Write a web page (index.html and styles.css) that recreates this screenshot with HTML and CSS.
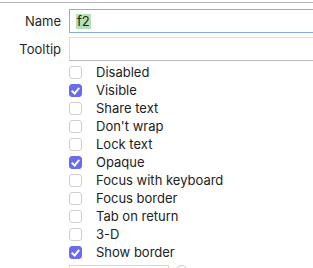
FILE: index.html
```html
<!DOCTYPE html>
<html lang="en">
<head>
  <meta charset="UTF-8">
  <meta name="viewport" content="width=device-width, initial-scale=1.0">
  <title>Field Properties</title>
  <link rel="stylesheet" href="styles.css">
</head>
<body>
  <div class="top-rule"></div>

  <div class="inspector">
    <div class="field-row">
      <label class="field-label" for="name">Name</label>
      <div class="text-box focused" id="name"><span class="selected">f2</span></div>
    </div>
    <div class="field-row">
      <label class="field-label" for="tooltip">Tooltip</label>
      <div class="text-box" id="tooltip"></div>
    </div>

    <ul class="check-list">
      <li><span class="check"></span>Disabled</li>
      <li><span class="check on"></span>Visible</li>
      <li><span class="check"></span>Share text</li>
      <li><span class="check"></span>Don't wrap</li>
      <li><span class="check"></span>Lock text</li>
      <li><span class="check on"></span>Opaque</li>
      <li><span class="check"></span>Focus with keyboard</li>
      <li><span class="check"></span>Focus border</li>
      <li><span class="check"></span>Tab on return</li>
      <li><span class="check"></span>3-D</li>
      <li><span class="check on"></span>Show border</li>
    </ul>

    <div class="stepper-row">
      <div class="small-box"></div>
      <span class="round-btn"></span>
    </div>
  </div>
</body>
</html>
```

FILE: styles.css
```css
body {
  font-family: Inter, "Liberation Sans", sans-serif;
  font-size: 13px;
  color: #222;
  background-color: #fff;
  margin: 0;
  padding: 0;
  overflow: hidden;
}

.top-rule {
  height: 2px;
  border-bottom: 1px solid #b4b4b4;
}

.inspector {
  padding-top: 6px;
}

.field-row {
  display: grid;
  grid-template-columns: 61px 1fr;
  column-gap: 8px;
  align-items: center;
  margin-bottom: 4px;
}

.field-label {
  text-align: right;
  color: #262626;
}

.text-box {
  height: 22px;
  border: 1px solid #dcdcdc;
  border-bottom-color: #b9b9b9;
  border-right: none;
  display: flex;
  align-items: center;
  padding-left: 6px;
}

.text-box.focused {
  border-color: #8eaae2;
}

.selected {
  background-color: #b5e0b0;
  line-height: 15px;
  padding: 0 1px;
}

.check-list {
  list-style: none;
  margin: -2px 0 0 0;
  padding: 0 0 0 69px;
}

.check-list li {
  display: flex;
  align-items: center;
  height: 18px;
}

.check {
  box-sizing: border-box;
  width: 13px;
  height: 13px;
  border: 1px solid #cfcfcf;
  border-radius: 3px;
  background: #fff;
  margin-right: 14px;
  position: relative;
}

.check.on {
  background: #6b6bf0;
  border-color: #6b6bf0;
}

.check.on::after {
  content: "";
  position: absolute;
  left: 3px;
  top: 1px;
  width: 3px;
  height: 6px;
  border: solid #fff;
  border-width: 0 2px 2px 0;
  transform: rotate(40deg);
}

.stepper-row {
  display: flex;
  align-items: flex-start;
  gap: 6px;
  padding-left: 69px;
  margin-top: 4px;
}

.small-box {
  width: 98px;
  height: 22px;
  border: 1px solid #d6d6d6;
}

.round-btn {
  width: 11px;
  height: 11px;
  border: 1px solid #c8c8c8;
  border-radius: 50%;
}
```
